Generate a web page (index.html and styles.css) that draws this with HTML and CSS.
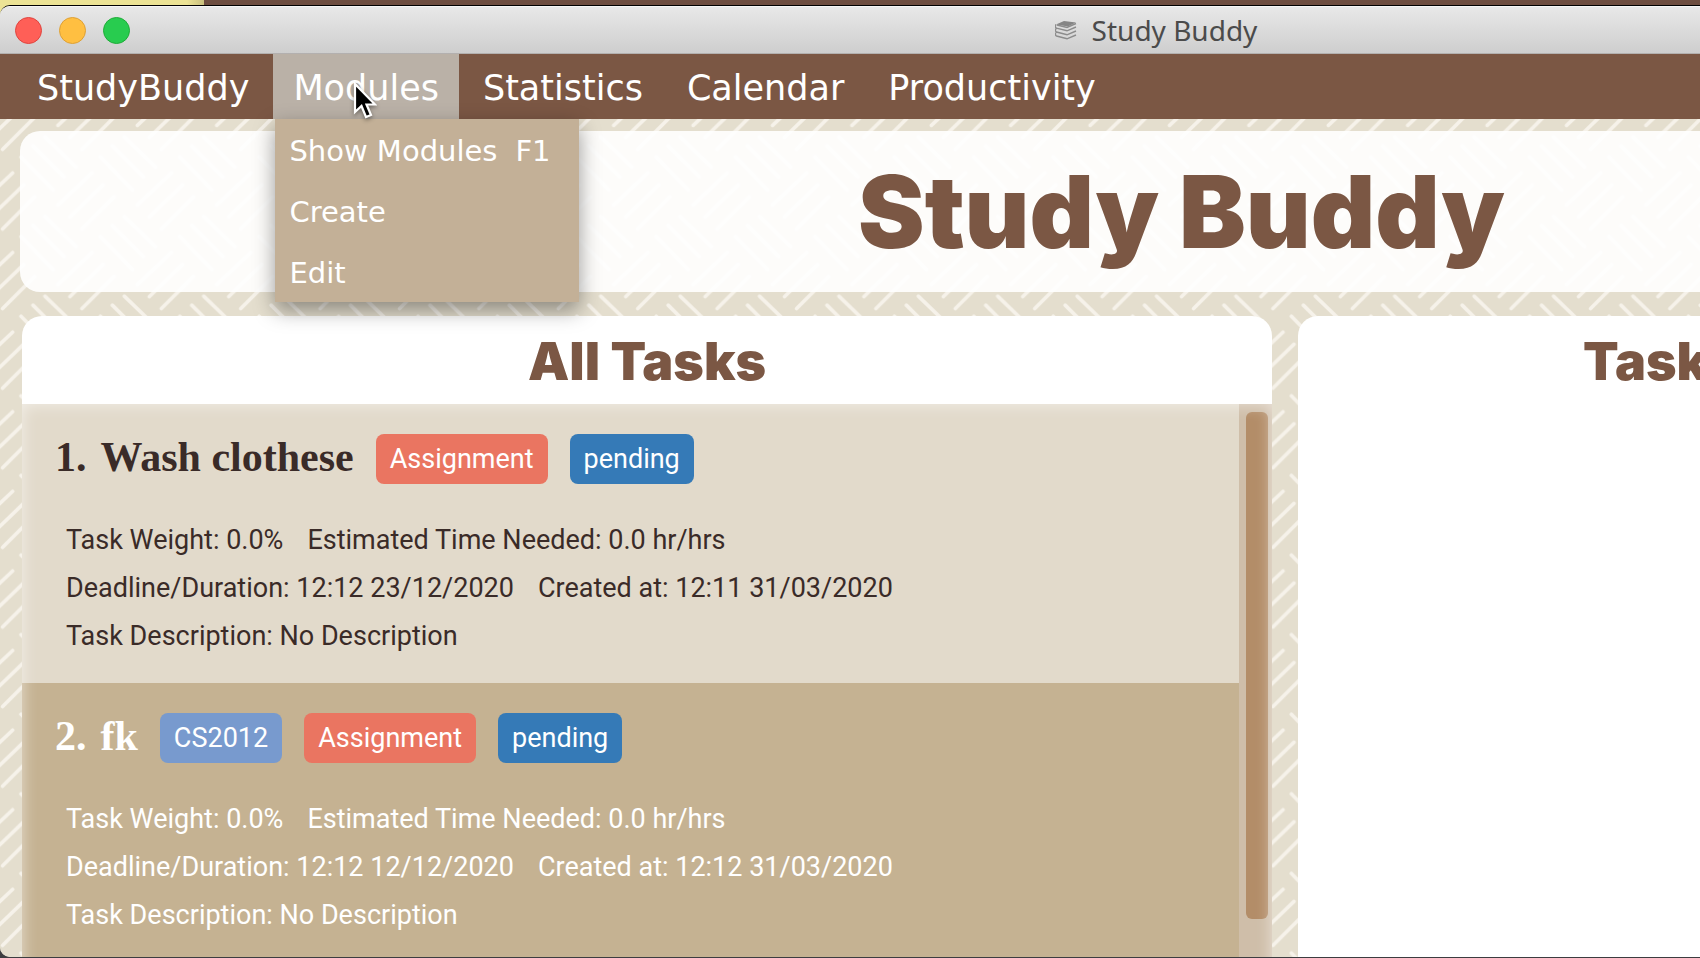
FILE: index.html
```html
<!DOCTYPE html>
<html lang="en">
<head>
<meta charset="utf-8">
<title>Study Buddy</title>
<link rel="stylesheet" href="styles.css">
</head>
<body>
<div class="desktop">
  <div class="window">
    <header class="titlebar">
      <div class="lights">
        <button class="light light-close" aria-label="Close"></button>
        <button class="light light-minimize" aria-label="Minimize"></button>
        <button class="light light-zoom" aria-label="Zoom"></button>
      </div>
      <div class="window-title">
        <svg class="stack-icon" viewBox="0 0 22 20" aria-hidden="true">
          <path d="M1 4.500 L9 1 L21 2.500 L13 6.500 Z" fill="#858585"/>
          <path d="M1 4.500 C0 6 0 7.500 1.500 8.200 L12 10.800 L21 7 M1.500 8.200 C0 9.500 0 11 1.500 12 L12 14.800 L21 11 M1.500 12 C0 13 0 15 1.500 16 L12 18.800 L21 15 M2 5 L12 7.500 L21 3.500" fill="none" stroke="#8c8c8c" stroke-width="1.400"/>
        </svg>
        <span>Study Buddy</span>
      </div>
    </header>
    <nav class="menubar">
      <div class="menu"><button class="menu-button">StudyBuddy</button></div>
      <div class="menu">
        <button class="menu-button is-open" aria-expanded="true">Modules</button>
        <div class="dropdown">
          <button class="dropdown-item"><span>Show Modules</span><span>F1</span></button>
          <button class="dropdown-item">Create</button>
          <button class="dropdown-item">Edit</button>
        </div>
        <svg class="cursor" viewBox="0 0 24 38" aria-hidden="true">
          <path d="M2 2 V30 L8.500 24 L13 35 L18 33 L13.500 22.500 H22 Z" fill="#000" stroke="#fff" stroke-width="2.200"/>
        </svg>
      </div>
      <div class="menu"><button class="menu-button">Statistics</button></div>
      <div class="menu"><button class="menu-button">Calendar</button></div>
      <div class="menu"><button class="menu-button">Productivity</button></div>
    </nav>
    <main class="workspace">
      <section class="banner"><h1>Study Buddy</h1></section>
      <div class="columns">
        <section class="panel">
          <h2 class="panel-title">All Tasks</h2>
          <div class="task-area">
            <ol class="tasks">
              <li class="task">
                <div class="task-head">
                  <h3 class="task-name"><span>1.</span><span>Wash clothese</span></h3>
                  <span class="badge badge-type">Assignment</span>
                  <span class="badge badge-status">pending</span>
                </div>
                <div class="details">
                  <p class="detail"><span>Task Weight: 0.0%</span><span>Estimated Time Needed: 0.0 hr/hrs</span></p>
                  <p class="detail"><span>Deadline/Duration: 12:12 23/12/2020</span><span>Created at: 12:11 31/03/2020</span></p>
                  <p class="detail">Task Description: No Description</p>
                </div>
              </li>
              <li class="task task-alt">
                <div class="task-head">
                  <h3 class="task-name"><span>2.</span><span>fk</span></h3>
                  <span class="badge badge-module">CS2012</span>
                  <span class="badge badge-type">Assignment</span>
                  <span class="badge badge-status">pending</span>
                </div>
                <div class="details">
                  <p class="detail"><span>Task Weight: 0.0%</span><span>Estimated Time Needed: 0.0 hr/hrs</span></p>
                  <p class="detail"><span>Deadline/Duration: 12:12 12/12/2020</span><span>Created at: 12:12 31/03/2020</span></p>
                  <p class="detail">Task Description: No Description</p>
                </div>
              </li>
            </ol>
            <div class="scrollbar"><div class="thumb"></div></div>
          </div>
        </section>
        <section class="panel panel-side">
          <h2 class="panel-title">Task</h2>
        </section>
      </div>
    </main>
  </div>
</div>
</body>
</html>
```
FILE: styles.css
```css
* { box-sizing: border-box; }

body { margin: 0; }

h1, h2, h3, p, ol { margin: 0; padding: 0; }

button {
  border: 0;
  padding: 0;
  background: none;
  color: inherit;
  font: inherit;
}

.desktop {
  height: 100vh;
  padding: 5px 0 1px;
  overflow: hidden;
  background:
    linear-gradient(90deg, #ece395 11%, #c9bf7e 12%, #6d4d40 12%) top / 100% 40px no-repeat,
    #3d3d40;
}

/* The window runs past the right edge of the desktop. */
.window {
  display: flex;
  flex-direction: column;
  width: 139vw;
  height: 100%;
  overflow: hidden;
  border-top: 1px solid #000;
  border-radius: 10px;
  background: #e4dece;
}

.titlebar {
  display: grid;
  grid-template-columns: 1fr auto 1fr;
  align-items: center;
  flex: none;
  height: 48px;
  padding: 0 66px 0 15px;
  border-top: 1px solid #f6f6f6;
  border-bottom: 1px solid #b3b0af;
  background: linear-gradient(#e8e8e8, #cecece);
}

.lights { display: flex; gap: 17px; }

.light {
  width: 27px;
  height: 27px;
  border: 1px solid;
  border-radius: 50%;
}

.light-close { background: #ff5f57; border-color: #e0443e; }
.light-minimize { background: #ffbf41; border-color: #dea034; }
.light-zoom { background: #28cc4f; border-color: #1eac37; }

.window-title {
  display: flex;
  align-items: center;
  gap: 15px;
  color: #4b4b4b;
  font: 28px "Noto Sans", sans-serif;
}

.stack-icon { width: 22px; height: 20px; }

.menubar {
  display: flex;
  flex: none;
  gap: 4px;
  height: 65px;
  padding-left: 17px;
  background: #7b5744;
  color: #fff;
  font: 35px "DejaVu Sans", Verdana, sans-serif;
}

.menu { position: relative; display: flex; }

.menu-button { padding: 2px 20px 0; }

.is-open { background: #bab1a7; }

.dropdown {
  position: absolute;
  z-index: 2;
  top: 100%;
  left: 2px;
  background: #c3b097;
  box-shadow: 0 8px 20px rgba(0, 0, 0, 0.4);
  font-size: 29px;
}

.dropdown-item {
  display: flex;
  align-items: center;
  gap: 18px;
  width: 100%;
  height: 61px;
  padding: 2px 28px 0 14px;
  white-space: nowrap;
}

.cursor {
  position: absolute;
  z-index: 3;
  top: 28px;
  left: 80px;
  width: 24px;
  height: 38px;
  filter: drop-shadow(0 2px 2px rgba(0, 0, 0, 0.4));
}

.workspace {
  display: flex;
  flex-direction: column;
  flex: 1;
  gap: 24px;
  min-height: 0;
  padding: 12px 20px 0;
  background-color: #e4dece;
  background-image: url("data:image/svg+xml,%3Csvg xmlns='http://www.w3.org/2000/svg' width='397' height='398'%3E%3Cdefs%3E%3Cg id='s'%3E%3Cpath d='M21 38L53 71M33 27L64 58M45 18L76 48M92 54L58 86M103 66L70 98M114 78L82 110' stroke='%23f6f2ea' stroke-width='3.6' stroke-linecap='round'/%3E%3C/g%3E%3Cpattern id='p' width='79.4' height='79.6' patternUnits='userSpaceOnUse'%3E%3Cuse href='%23s'/%3E%3Cuse href='%23s' x='-79.4'/%3E%3Cuse href='%23s' y='-79.6'/%3E%3Cuse href='%23s' x='-79.4' y='-79.6'/%3E%3C/pattern%3E%3C/defs%3E%3Crect width='397' height='398' fill='url(%23p)'/%3E%3C/svg%3E");
}

.banner {
  display: flex;
  align-items: center;
  justify-content: center;
  flex: none;
  height: 161px;
  border-radius: 20px;
  background: rgba(255, 255, 255, 0.9);
  color: #7b5744;
  font-family: Inter, sans-serif;
}

.banner h1 { font-size: 100px; font-weight: 900; line-height: 1; }

.columns {
  display: grid;
  grid-template-columns: 1250fr 1043fr;
  flex: 1;
  gap: 26px;
  min-height: 0;
  padding: 0 2px;
}

.panel {
  display: flex;
  flex-direction: column;
  min-height: 0;
  overflow: hidden;
  border-radius: 20px 20px 0 0;
  background: #fff;
}

.panel-title {
  flex: none;
  height: 88px;
  padding-top: 2px;
  color: #7b5744;
  font: 900 52px/88px Inter, sans-serif;
  text-align: center;
}

.panel-side .panel-title { padding-left: 285px; text-align: left; }

.task-area {
  position: relative;
  display: flex;
  flex: 1;
  min-height: 0;
}

.task-area::after {
  content: "";
  position: absolute;
  inset: 0 0 -20px;
  box-shadow: inset 0 0 16px rgba(255, 255, 255, 0.6);
  pointer-events: none;
}

.tasks { flex: 1; overflow: hidden; list-style: none; }

.task {
  height: 279px;
  padding: 30px 33px 0;
  background: #e2dacb;
  color: #3a2b28;
  font: 27px Roboto, sans-serif;
}

.task-alt { background: #c5b292; color: #fff; }

.task-head { display: flex; align-items: flex-start; gap: 22px; height: 50px; }

.task-name {
  display: flex;
  gap: 14px;
  font: bold 42px/46px "Liberation Serif", serif;
}

.badge {
  padding: 0 14px;
  border-radius: 8px;
  color: #fff;
  line-height: 50px;
}

.badge-module { background: #789ace; }
.badge-type { background: #ea7561; }
.badge-status { background: #357ab7; }

.details { padding: 32px 11px 0; }

.detail { display: flex; gap: 24px; line-height: 48px; }

.scrollbar {
  display: flex;
  flex: none;
  width: 33px;
  padding: 8px 4px 38px 7px;
  background: #cfbea9;
}

.thumb { flex: 1; border-radius: 6px; background: #b38d68; }
```
